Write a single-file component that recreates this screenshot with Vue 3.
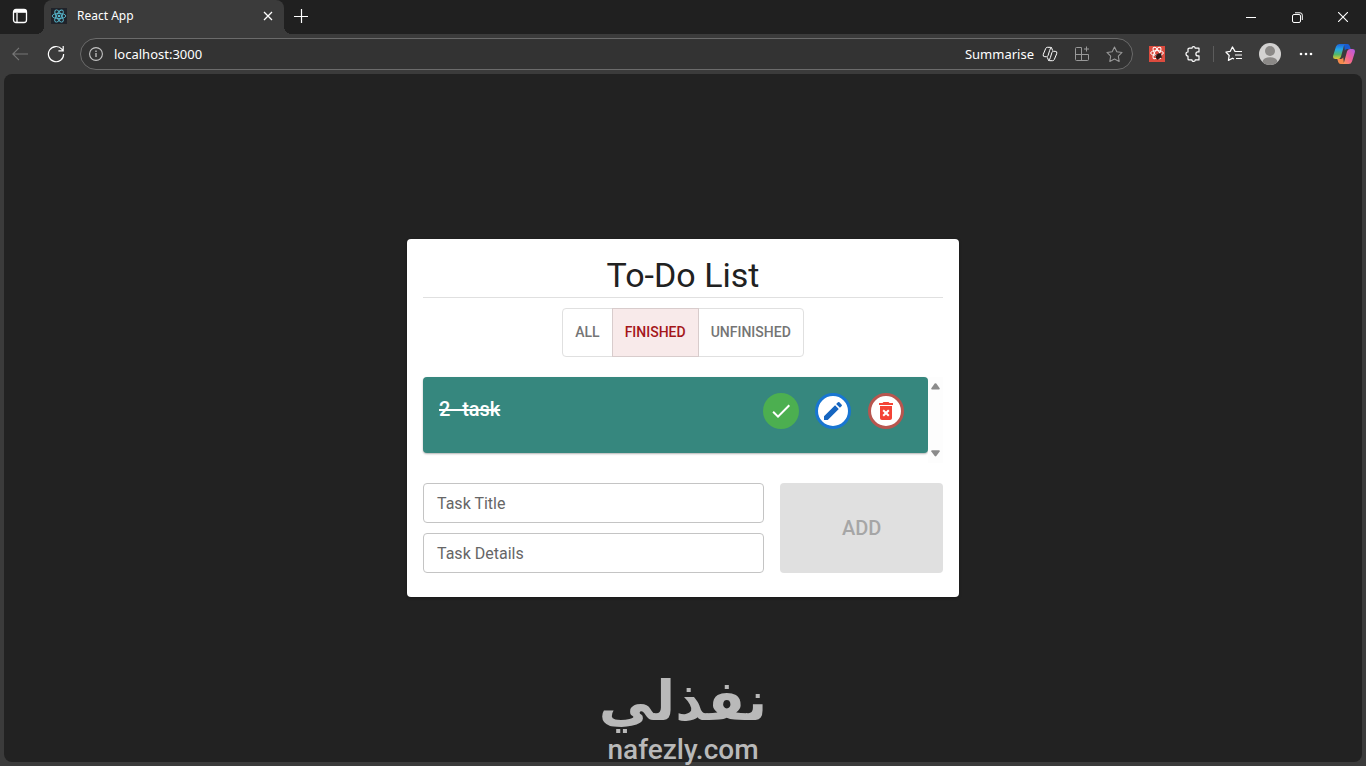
<template>
    <div class="browser">
        <header class="tab-strip">
            <button type="button" class="tab-menu" aria-label="Tab actions">
                <svg viewBox="0 0 16 16" width="16" height="16" fill="none" stroke="currentColor" stroke-width="1.3">
                    <rect x="1.5" y="1.5" width="13" height="13" rx="2.5" />
                    <path d="M2 4.2h12M5 5v9" />
                    <path d="M2 3h12" stroke-width="2.4" />
                </svg>
            </button>
            <div class="tab">
                <svg class="favicon" viewBox="0 0 16 16" width="16" height="16" fill="none" stroke="#58b9cf"
                    stroke-width=".9">
                    <rect width="16" height="16" fill="#20232a" stroke="none" />
                    <ellipse cx="8" cy="8" rx="6.8" ry="2.6" />
                    <ellipse cx="8" cy="8" rx="6.8" ry="2.6" transform="rotate(60 8 8)" />
                    <ellipse cx="8" cy="8" rx="6.8" ry="2.6" transform="rotate(120 8 8)" />
                    <circle cx="8" cy="8" r="1.3" fill="#58b9cf" stroke="none" />
                </svg>
                <span class="tab-title">React App</span>
                <button type="button" class="tab-close" aria-label="Close tab">
                    <svg viewBox="0 0 10 10" width="10" height="10" stroke="currentColor" stroke-width="1.3">
                        <path d="M1 1l8 8M9 1l-8 8" />
                    </svg>
                </button>
            </div>
            <button type="button" class="new-tab" aria-label="New tab">
                <svg viewBox="0 0 14 14" width="14" height="14" stroke="currentColor" stroke-width="1.2">
                    <path d="M7.5 0v14M0 7.5h14" />
                </svg>
            </button>
            <div class="window-controls">
                <button type="button" aria-label="Minimise">
                    <svg viewBox="0 0 10 10" width="10" height="10" stroke="currentColor">
                        <path d="M0 5.5h10" />
                    </svg>
                </button>
                <button type="button" aria-label="Restore">
                    <svg viewBox="0 0 11 11" width="11" height="11" fill="none" stroke="currentColor">
                        <rect x=".5" y="2.5" width="8" height="8" rx="1.5" />
                        <path d="M3 .8h5q2.3 0 2.3 2.3V8" />
                    </svg>
                </button>
                <button type="button" aria-label="Close">
                    <svg viewBox="0 0 10 10" width="10" height="10" stroke="currentColor" stroke-width="1.1">
                        <path d="M0 0l10 10M10 0L0 10" />
                    </svg>
                </button>
            </div>
        </header>

        <nav class="toolbar">
            <button type="button" class="tool back" aria-label="Back" disabled>
                <svg viewBox="0 0 16 14" width="16" height="14" fill="none" stroke="currentColor" stroke-width="1.1">
                    <path d="M16 7H.8M7 .8L.8 7 7 13.2" />
                </svg>
            </button>
            <button type="button" class="tool" aria-label="Refresh">
                <svg viewBox="0 0 18 18" width="18" height="18" fill="none" stroke="currentColor" stroke-width="1.2">
                    <path d="M16.6 9A7.6 7.6 0 1 1 14.8 4.2L16 5.6M16.2 1v4.8h-4.8" />
                </svg>
            </button>
            <div class="address">
                <svg class="info" viewBox="0 0 14 14" width="14" height="14" fill="none" stroke="currentColor"
                    stroke-width="1.1">
                    <circle cx="7" cy="7" r="6.4" />
                    <path d="M7 6v4M7 3.6v1.3" stroke-width="1.3" />
                </svg>
                <input v-model="url" class="url" type="text" aria-label="Address" />
                <button type="button" class="summarise">Summarise
                    <svg viewBox="0 0 16 16" width="16" height="16" fill="none" stroke="currentColor"
                        stroke-linejoin="round">
                        <path
                            d="M10.600 4.600L9.800 2.400Q9.400 1.300 8.200 1.300H5.400Q4.200 1.300 3.700 2.500L1.300 8.300Q.5 10.700 2.800 10.700H4.600Q5.700 10.700 6.100 9.400L7.600 4.600Q8.300 1.300 10 1.600" />
                        <path
                            d="M5.400 11.400L6.200 13.600Q6.600 14.700 7.800 14.700H10.600Q11.800 14.700 12.300 13.500L14.700 7.700Q15.500 5.300 13.200 5.300H11.400Q10.300 5.300 9.900 6.600L8.400 11.400Q7.700 14.700 6 14.400" />
                    </svg>
                </button>
                <button type="button" class="address-tool dim" aria-label="Install app">
                    <svg viewBox="0 0 16 16" width="16" height="16" fill="none" stroke="currentColor">
                        <path d="M7.5 1.5h-5q-1 0-1 1v11q0 1 1 1h11q1 0 1-1v-5h-13M7.5 1.5v13M12.5 .5v5M10 3h5" />
                    </svg>
                </button>
                <button type="button" class="address-tool dim" aria-label="Add to favourites">
                    <svg viewBox="0 0 16 16" width="17" height="17" fill="none" stroke="currentColor"
                        stroke-linejoin="round">
                        <path
                            d="M8 .9l2.2 4.5 4.9.7-3.5 3.5.8 4.9L8 12.2l-4.400 2.300.8-4.900L.9 6.100l4.900-.7z" />
                    </svg>
                </button>
            </div>
            <div class="extensions">
                <button type="button" class="tool" aria-label="React Developer Tools">
                    <svg viewBox="0 0 16 16" width="16" height="16" fill="none" stroke="#fff">
                        <rect width="16" height="16" fill="#dc4b3e" stroke="none" />
                        <ellipse cx="8" cy="7" rx="6.4" ry="2.4" />
                        <ellipse cx="8" cy="7" rx="6.4" ry="2.4" transform="rotate(60 8 7)" />
                        <ellipse cx="8" cy="7" rx="6.4" ry="2.4" transform="rotate(120 8 7)" />
                        <path d="M6 9.500l6-2M8 13.500l5-3M10 8l3 4" stroke="#2b1613" stroke-width=".8" />
                        <ellipse cx="9.6" cy="10.2" rx="2.2" ry="3.2" transform="rotate(45 9.6 10.2)" fill="#2b1613"
                            stroke="none" />
                    </svg>
                </button>
                <button type="button" class="tool" aria-label="Extensions">
                    <svg viewBox="0 0 16 16" width="16" height="16" fill="none" stroke="currentColor"
                        stroke-width="1.2" stroke-linejoin="round">
                        <path
                            d="M4.4 2.2H7Q7 .7 8.6 .7T10.2 2.2H14v3.7h-1.1a2 2 0 0 0 0 4H14v4h-3.8q0 1.5-1.6 1.5T7 13.9H4Q3 13.9 3 12.9V10Q1 10 1 8t2-2V3.2q0-1 1.4-1z" />
                    </svg>
                </button>
                <span class="divider"></span>
                <button type="button" class="tool" aria-label="Favourites">
                    <svg viewBox="0 0 18 16" width="18" height="16" fill="none" stroke="currentColor"
                        stroke-width="1.2" stroke-linejoin="round">
                        <path
                            d="M10 5.4L7.4 .9 5.3 5.3.9 6l3.3 3.5-.8 4.9 4.1-2.2 1.5.8M9.5 5.5H17M10 9h7M11 12.5h6" />
                    </svg>
                </button>
                <button type="button" class="tool" aria-label="Profile">
                    <svg viewBox="0 0 22 22" width="22" height="22">
                        <clipPath id="avatar">
                            <circle cx="11" cy="11" r="11" />
                        </clipPath>
                        <g clip-path="url(#avatar)">
                            <rect width="22" height="22" fill="#d3d2d1" />
                            <circle cx="11" cy="8" r="5" fill="#8b8987" />
                            <ellipse cx="11" cy="19" rx="7.5" ry="4.8" fill="#8b8987" />
                        </g>
                    </svg>
                </button>
                <button type="button" class="tool" aria-label="Settings and more">
                    <svg viewBox="0 0 14 4" width="14" height="4" fill="currentColor">
                        <circle cx="2" cy="2" r="1.3" />
                        <circle cx="7" cy="2" r="1.3" />
                        <circle cx="12" cy="2" r="1.3" />
                    </svg>
                </button>
                <button type="button" class="tool copilot" aria-label="Copilot">
                    <svg viewBox="0 0 22 20" width="22" height="20">
                        <defs>
                            <linearGradient id="cool" x1="0" y1="0" x2="0" y2="1">
                                <stop offset="0" stop-color="#1d63d8" />
                                <stop offset=".35" stop-color="#23a7e8" />
                                <stop offset=".7" stop-color="#54b968" />
                                <stop offset="1" stop-color="#e6c832" />
                            </linearGradient>
                            <linearGradient id="warm" x1="1" y1="0" x2="0" y2="1">
                                <stop offset="0" stop-color="#b05be8" />
                                <stop offset=".5" stop-color="#f0609a" />
                                <stop offset="1" stop-color="#ffa04e" />
                            </linearGradient>
                        </defs>
                        <path fill="#1a5bd0" d="M11 0h3.4q1.8 0 2.4 2l.9 3H14q-1.6 0-2.2 1.7z" />
                        <path fill="url(#cool)"
                            d="M6.4 0H13q-1.6.3-2.2 2.2L8 12.5Q7.4 15 5 15H2.5Q-.8 15 .3 11.3L3 2.600Q3.800 0 6.400 0z" />
                        <path fill="#f58a4c" d="M11 20H7.600q-1.800 0-2.400-2l-.9-3H8q1.600 0 2.200-1.700z" />
                        <path fill="url(#warm)"
                            d="M15.600 20H9q1.600-.3 2.200-2.200L14 7.500Q14.600 5 17 5h2.500q3.300 0 2.200 3.700L19 17.400Q18.200 20 15.600 20z" />
                    </svg>
                </button>
            </div>
        </nav>

        <main class="page">
            <section class="card">
                <h1 class="card-title">To-Do List</h1>

                <div class="filters">
                    <button v-for="f in filters" :key="f" type="button" class="filter"
                        :class="{ selected: f === filter }" @click="filter = f">{{ f }}</button>
                </div>

                <div class="list">
                    <div class="tasks">
                        <article v-for="task in visibleTasks" :key="task.id" class="task">
                            <h2 class="task-title" :class="{ done: task.done }">{{ task.title }}</h2>
                            <div class="actions">
                                <button type="button" class="action check" aria-label="Toggle finished"
                                    @click="task.done = !task.done">
                                    <svg viewBox="0 0 24 24" width="24" height="24" fill="currentColor">
                                        <path d="M9 16.17 4.83 12l-1.42 1.41L9 19 21 7l-1.41-1.41z" />
                                    </svg>
                                </button>
                                <button type="button" class="action edit" aria-label="Edit">
                                    <svg viewBox="0 0 24 24" width="24" height="24" fill="currentColor">
                                        <path
                                            d="M3 17.25V21h3.75L17.81 9.94l-3.75-3.75L3 17.25zM20.71 7.04c.39-.39.39-1.02 0-1.41l-2.34-2.34a.996.996 0 0 0-1.41 0l-1.83 1.83 3.75 3.75 1.83-1.83z" />
                                    </svg>
                                </button>
                                <button type="button" class="action delete" aria-label="Delete"
                                    @click="remove(task.id)">
                                    <svg viewBox="0 0 24 24" width="24" height="24" fill="currentColor">
                                        <path
                                            d="M6 19c0 1.1.9 2 2 2h8c1.1 0 2-.9 2-2V7H6v12zm2.46-7.12 1.41-1.41L12 12.59l2.12-2.12 1.41 1.41L13.41 14l2.12 2.12-1.41 1.41L12 15.41l-2.12 2.12-1.41-1.41L10.59 14l-2.13-2.12zM15.5 4l-1-1h-5l-1 1H5v2h14V4z" />
                                    </svg>
                                </button>
                            </div>
                        </article>
                    </div>
                    <div class="scrollbar">
                        <svg viewBox="0 0 9 7" width="9" height="7" fill="#8b8b8b">
                            <path d="M3.7.6Q4.500-.3 5.300.6L8.700 5.300Q9 6.500 8 6.500H1Q0 6.500.3 5.300z" />
                        </svg>
                        <svg viewBox="0 0 9 7" width="9" height="7" fill="#8b8b8b">
                            <path d="M3.700 6.100Q4.500 7 5.300 6.100L8.700 1.400Q9 .2 8 .2H1Q0 .2.3 1.400z" />
                        </svg>
                    </div>
                </div>

                <form class="new-task" @submit.prevent="addTask">
                    <div class="fields">
                        <div class="field">
                            <input id="task-title" v-model="title" type="text" placeholder=" " />
                            <label for="task-title">Task Title</label>
                        </div>
                        <div class="field">
                            <input id="task-details" v-model="details" type="text" placeholder=" " />
                            <label for="task-details">Task Details</label>
                        </div>
                    </div>
                    <button type="submit" class="add" :disabled="!title">Add</button>
                </form>
            </section>
        </main>

        <div class="watermark">
            <span class="watermark-ar" lang="ar" dir="rtl">نفذلي</span>
            <span class="watermark-en">nafezly.com</span>
        </div>
    </div>
</template>

<script setup>
import { ref, computed } from 'vue'

const url = ref('localhost:3000')

const filters = ['All', 'Finished', 'Unfinished']
const filter = ref('Finished')
const title = ref('')
const details = ref('')

const tasks = ref([
    { id: 2, title: '2- task', details: '', done: true }
])

const visibleTasks = computed(() => {
    if (filter.value === 'Finished') return tasks.value.filter(t => t.done)
    if (filter.value === 'Unfinished') return tasks.value.filter(t => !t.done)
    return tasks.value
})

const addTask = () => {
    tasks.value.push({ id: Date.now(), title: title.value, details: details.value, done: false })
    title.value = ''
    details.value = ''
}

const remove = (id) => { tasks.value = tasks.value.filter(t => t.id !== id) }
</script>

<style>
body {
    margin: 0;
    background: #3b3b3b;
}
</style>

<style scoped>
.browser {
    position: relative;
    display: flex;
    flex-direction: column;
    min-height: 100vh;
    background: #3b3b3b;
    color: #fff;
    font-family: "Noto Sans", sans-serif;
}

.browser *,
.browser {
    box-sizing: border-box;
}

button {
    display: flex;
    align-items: center;
    justify-content: center;
    border: none;
    padding: 0;
    background: transparent;
    color: inherit;
    font-family: inherit;
    cursor: pointer;
}

button:disabled {
    cursor: default;
}

svg {
    display: block;
    flex: none;
}

.tab-strip {
    display: flex;
    height: 34px;
    background: #202020;
}

.tab-menu {
    width: 40px;
    padding-bottom: 2px;
    margin-right: 4px;
}

.tab {
    position: relative;
    display: flex;
    align-items: center;
    width: 240px;
    padding: 0 10px 2px 7px;
    background: #3b3b3b;
    border-radius: 8px 8px 0 0;
}

.tab::before,
.tab::after {
    content: "";
    position: absolute;
    bottom: 0;
    width: 8px;
    height: 8px;
}

.tab::before {
    right: 100%;
    background: radial-gradient(circle at 0 0, #202020 8px, #3b3b3b 8px);
}

.tab::after {
    left: 100%;
    background: radial-gradient(circle at 100% 0, #202020 8px, #3b3b3b 8px);
}

.tab-title {
    flex: 1;
    margin-left: 10px;
    font-size: 12px;
    line-height: 16px;
}

.tab-close {
    width: 12px;
    height: 20px;
}

.new-tab {
    width: 34px;
    padding-bottom: 2px;
}

.window-controls {
    display: flex;
    margin-left: auto;
}

.window-controls button {
    width: 46px;
}

.toolbar {
    display: flex;
    align-items: center;
    height: 40px;
    padding: 0 4px 0 2px;
}

.tool {
    width: 36px;
    height: 32px;
}

.back {
    color: #777;
}

.address {
    display: flex;
    flex: 1;
    align-items: center;
    height: 32px;
    margin-left: 6px;
    padding: 0 2px 0 8px;
    border: 1px solid #6b6b6b;
    border-radius: 16px;
    background: #333;
}

.info {
    color: #c4c4c4;
}

.url {
    flex: 1;
    min-width: 0;
    margin-left: 11px;
    padding: 0;
    border: none;
    outline: none;
    background: transparent;
    color: #fff;
    font-family: inherit;
    font-size: 13px;
}

.summarise {
    gap: 8px;
    padding-right: 8px;
    font-size: 13px;
}

.address-tool {
    width: 32px;
    height: 30px;
}

.dim {
    color: #999;
}

.extensions {
    display: flex;
    align-items: center;
    margin-left: 6px;
}

.divider {
    width: 1px;
    height: 16px;
    margin: 0 2px;
    background: #5c5c5c;
}

.copilot {
    margin-left: 2px;
}

.page {
    display: flex;
    flex: 1;
    align-items: center;
    justify-content: center;
    margin: 0 4px 4px;
    border-radius: 8px;
    background: #222;
    font-family: Roboto, "Liberation Sans", sans-serif;
}

.card {
    width: 100%;
    max-width: 552px;
    padding: 16px 16px 24px;
    border-radius: 4px;
    background: #fff;
    color: #212121;
    box-shadow: 0 1px 3px rgba(0, 0, 0, .3);
}

.card-title {
    margin: 0;
    padding-bottom: 2px;
    border-bottom: 1px solid #e0e0e0;
    font-size: 34px;
    font-weight: 400;
    line-height: 40px;
    text-align: center;
}

.filters {
    display: flex;
    justify-content: center;
    margin: 10px 0 20px;
}

.filter {
    padding: 11px 12px;
    border: 1px solid #e0e0e0;
    color: #757575;
    font-size: 14px;
    font-weight: 500;
    line-height: 25px;
    text-transform: uppercase;
}

.filter + .filter {
    margin-left: -1px;
}

.filter:first-child {
    border-radius: 4px 0 0 4px;
}

.filter:last-child {
    border-radius: 0 4px 4px 0;
}

.filter.selected {
    z-index: 1;
    border-color: #d8cccc;
    background: #f8eaea;
    color: #a4161a;
}

.list {
    display: flex;
    min-height: 86px;
}

.tasks {
    flex: 1;
}

.task {
    display: grid;
    grid-template-columns: 2fr 1fr;
    min-height: 76px;
    padding: 16px;
    border-radius: 4px;
    background: #36877e;
    box-shadow: 0 1px 2px rgba(0, 0, 0, .3);
    color: #fff;
}

.task-title {
    margin: 0;
    font-size: 20px;
    font-weight: 500;
    line-height: 32px;
}

.task-title.done {
    text-decoration: line-through;
}

.actions {
    display: grid;
    grid-template-columns: repeat(3, 1fr);
    justify-items: center;
    align-items: start;
}

.action {
    width: 36px;
    height: 36px;
    border-radius: 50%;
    background: #fff;
}

.check {
    background: #4caf50;
}

.edit {
    border: 3px solid #1876d2;
    color: #1565c0;
}

.delete {
    border: 3px solid #b8564f;
    color: #f44336;
}

.scrollbar {
    display: flex;
    flex-direction: column;
    align-items: center;
    justify-content: space-between;
    width: 15px;
    padding: 6px 0;
    background: #fdfdfd;
}

.new-task {
    display: grid;
    grid-template-columns: 21fr 10fr;
    gap: 16px;
    margin-top: 20px;
}

.fields {
    display: flex;
    flex-direction: column;
    gap: 10px;
}

.field {
    position: relative;
}

.field input {
    display: block;
    width: 100%;
    height: 40px;
    padding: 0 13px;
    border: 1px solid #c4c4c4;
    border-radius: 4px;
    outline: none;
    background: transparent;
    color: #212121;
    font-family: inherit;
    font-size: 16px;
}

.field input:focus {
    border-color: #a4161a;
}

.field label {
    position: absolute;
    top: 9px;
    left: 14px;
    color: #666;
    font-size: 16px;
    line-height: 24px;
    pointer-events: none;
}

.field input:not(:placeholder-shown) + label {
    display: none;
}

.add {
    border-radius: 4px;
    background: #a4161a;
    color: #fff;
    font-size: 20px;
    font-weight: 500;
    text-transform: uppercase;
}

.add:disabled {
    background: #e0e0e0;
    color: #a6a6a6;
}

.watermark {
    position: absolute;
    right: 0;
    bottom: 0;
    left: 0;
    display: flex;
    flex-direction: column;
    align-items: center;
    color: #b9b9b9;
    pointer-events: none;
}

.watermark-ar {
    font-family: "DejaVu Sans", sans-serif;
    font-size: 55px;
    font-weight: 700;
    line-height: 64px;
}

.watermark-en {
    font-family: Roboto, sans-serif;
    font-size: 28px;
    font-weight: 500;
    line-height: 33px;
}
</style>
